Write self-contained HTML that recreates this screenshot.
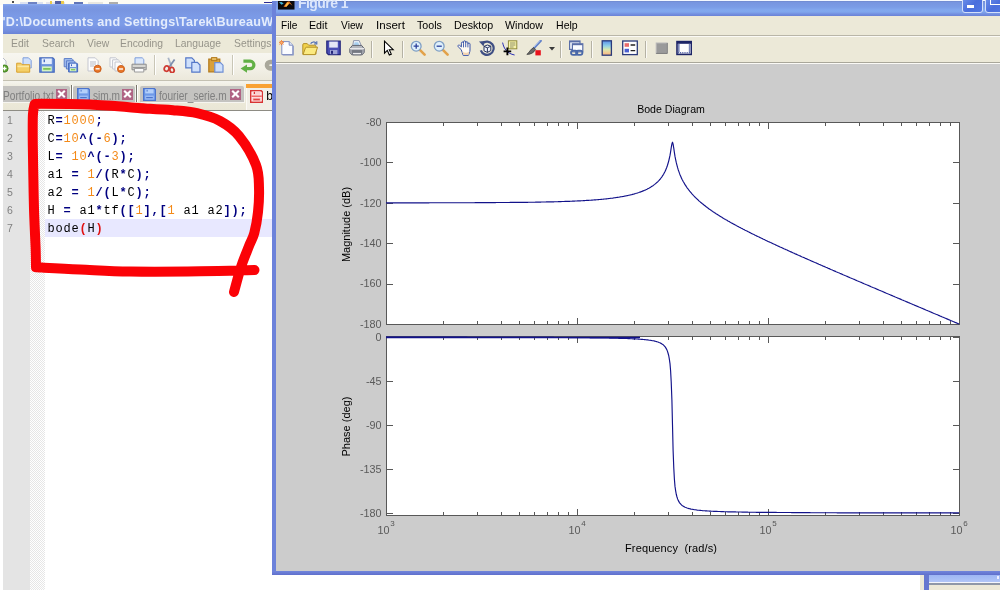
<!DOCTYPE html>
<html>
<head>
<meta charset="utf-8">
<title>screenshot</title>
<style>
html,body{margin:0;padding:0;background:#fff;}
body{width:1000px;height:600px;position:relative;overflow:hidden;font-family:"Liberation Sans",sans-serif;}
.abs{position:absolute;}
#stage{position:absolute;left:0;top:0;width:1000px;height:600px;overflow:hidden;will-change:transform;}
/* ---------- Notepad++ window ---------- */
#npp{position:absolute;left:3px;top:4px;width:270px;height:586px;background:#fff;overflow:hidden;}
#npp-title{position:absolute;left:0;top:0;width:270px;height:30px;
  background:linear-gradient(to bottom,#8dacf0 0px,#7c9ae4 2px,#7895e0 6px,#7b9ae6 12px,#7d9ce8 20px,#7590e0 26px,#6a83d6 30px);}
#npp-title span{position:absolute;left:-0.500px;top:10.500px;font-weight:bold;font-size:12.600px;color:#e4ecfc;white-space:nowrap;letter-spacing:0.210px;}
#npp-menu{position:absolute;left:0;top:30px;width:270px;height:19px;background:#ece9d8;}
#npp-menu span{position:absolute;top:3px;font-size:11px;color:#96948a;white-space:nowrap;transform:scaleX(.94);transform-origin:0 0;}
#npp-tool{position:absolute;left:0;top:49px;width:270px;height:29px;background:linear-gradient(to bottom,#f7f6f0 0,#f3f1e8 14px,#ece9dc 26px,#ece9dc 27px,#c2bfb0 27px,#c8c5b6 28.500px,#f4f3ec 28.500px,#f4f3ec 29px);box-sizing:border-box;}
#npp-tabs{position:absolute;left:0;top:78px;width:270px;height:29px;background:linear-gradient(to bottom,#f4f3ec 0,#efede2 4px,#ece9d8 20px,#e9e6d6 28px);border-bottom:1px solid #8e8c84;box-sizing:border-box;}
.tab{position:absolute;top:4px;height:16px;background:#c4c3c0;border-radius:2px 2px 0 0;box-shadow:1px 1px 0 #f6f5f0;}
.tab span{position:absolute;top:3.300px;font-size:12px;color:#7f7f7f;white-space:nowrap;transform:scaleX(.845);transform-origin:0 0;}
.tabx{position:absolute;top:3px;width:11px;height:10.500px;background:#b06484;}
.tabx svg{position:absolute;left:0;top:0;}
#gutter1{position:absolute;left:0;top:107px;width:27px;height:479px;background:#e4e4e4;}
#gutter2{position:absolute;left:27px;top:107px;width:15px;height:479px;background:repeating-conic-gradient(#e6e6e6 0 25%,#ffffff 0 50%) 0 0/2px 2px;}
.ln{position:absolute;left:4px;font-family:"Liberation Sans",sans-serif;font-size:10.500px;color:#808080;line-height:18px;height:18px;margin-top:0px;}
.code{position:absolute;left:44.400px;font-family:"Liberation Mono",monospace;font-size:12px;letter-spacing:0.800px;color:#000;line-height:18px;height:18px;white-space:pre;margin-top:0.600px;}
.code b{color:#000080;font-weight:bold;}
.code i{color:#f48a18;font-style:normal;}
.code u{color:#e01010;text-decoration:none;font-weight:bold;}
#curline{position:absolute;left:42px;top:215px;width:228px;height:18px;background:#e8e8ff;}
/* ---------- Figure window ---------- */
#fig{position:absolute;left:272px;top:0px;width:728px;height:575px;background:#cccccc;overflow:hidden;}
#fig-title{position:absolute;left:0;top:0;width:728px;height:16px;
  background:linear-gradient(to bottom,#f2f8ff 0px,#f2f8ff 1px,#6f88cc 1px,#7796e0 2.500px,#7a9ce6 7px,#82a8ee 10px,#80a6ec 12px,#7490e0 14px,#6a82d6 16px);}
#fig-title span{position:absolute;left:26px;top:-5px;font-weight:bold;font-size:14px;color:#dbe6fb;white-space:nowrap;letter-spacing:-0.550px;}
#fig-lb{position:absolute;left:0;top:1px;width:4px;height:574px;background:#6c82da;}
#fig-bb{position:absolute;left:0;top:571px;width:728px;height:4px;background:linear-gradient(to bottom,#7186dc,#5f70cc);}
#fig-menu{position:absolute;left:4px;top:16px;width:724px;height:19px;background:#ece9d8;}
#fig-menu span{position:absolute;top:3px;font-size:11px;color:#000;white-space:nowrap;transform-origin:0 0;}
#fig-tool{position:absolute;left:4px;top:35px;width:724px;height:29px;background:#ece9d8;border-top:1px solid #b9b6a8;border-bottom:1px solid #fbfaf6;box-sizing:border-box;}
#fig-tool:after{content:"";position:absolute;left:0;bottom:0;width:100%;height:1px;background:#a9a79a;}
#fig-tool:before{content:"";position:absolute;left:0;top:0;width:100%;height:1px;background:#fbfaf5;}
.sep{position:absolute;top:5px;width:1px;height:17px;background:#b5b2a4;border-right:1px solid #fbfaf6;}
.ico{position:absolute;}
svg text.tl{font-family:"Liberation Sans",sans-serif;font-size:10.800px;fill:#5a5a5a;}
svg text.ts{font-family:"Liberation Sans",sans-serif;font-size:8px;fill:#555;}
svg text.tt{font-family:"Liberation Sans",sans-serif;font-size:11px;fill:#000;}
svg text.t2{font-family:"Liberation Sans",sans-serif;font-size:10.600px;fill:#000;}
</style>
</head>
<body>
<div id="stage">

<!-- top sliver of whatever is behind -->
<div class="abs" style="left:0;top:0;width:272px;height:5px;background:#fdfcf4;"></div>
<div class="abs" style="left:0;top:0;width:272px;height:4px;opacity:.8;filter:blur(.4px)">
<div class="abs" style="left:12px;top:1px;width:1.500px;height:1.500px;background:#222;"></div>
<div class="abs" style="left:20px;top:1.500px;width:23px;height:2.500px;background:#d4dcf0;"></div>
<div class="abs" style="left:28px;top:1.500px;width:9px;height:2.500px;background:#4a64b8;"></div>
<div class="abs" style="left:46px;top:1.500px;width:19px;height:2.500px;background:#e0e0ea;"></div>
<div class="abs" style="left:49.500px;top:1px;width:2.500px;height:3px;background:#e8c020;"></div>
<div class="abs" style="left:55px;top:1px;width:6px;height:3px;background:#2a3a90;"></div>
<div class="abs" style="left:61px;top:1px;width:2.500px;height:3px;background:#e8c020;"></div>
<div class="abs" style="left:74px;top:1.500px;width:9px;height:2.500px;background:#3a54a8;"></div>
<div class="abs" style="left:88px;top:1.500px;width:15px;height:2.500px;background:#e4e2dc;"></div>
<div class="abs" style="left:109px;top:1.500px;width:9px;height:2px;background:#9a9a9a;"></div>
</div>
<div class="abs" style="left:264px;top:2px;width:8px;height:1px;background:#2a2a90;"></div>

<!-- =================== Notepad++ =================== -->
<div id="npp">
  <div id="npp-title"><span>'D:\Documents and Settings\Tarek\BureauW</span></div>
  <div id="npp-menu">
    <span style="left:8px">Edit</span>
    <span style="left:39px">Search</span>
    <span style="left:84px">View</span>
    <span style="left:117px">Encoding</span>
    <span style="left:172px">Language</span>
    <span style="left:231px">Settings</span>
  </div>
  <div id="npp-tool">
  <svg class="ico" style="left:-10px;top:4px" width="16" height="16" viewBox="0 0 16 16" ><path d="M3 1h7l3 3v11H3z" fill="#fdfdfd" stroke="#b9bcc8" stroke-width="1"/>
<circle cx="11.5" cy="11.5" r="3.6" fill="#5aa02c" stroke="#3f7f1c" stroke-width=".8"/><path d="M9.5 11.5h4M11.5 9.5v4" stroke="#fff" stroke-width="1.3"/></svg>
<svg class="ico" style="left:13px;top:4px" width="16" height="16" viewBox="0 0 16 16" ><path d="M7 .8h5.5l2.7 2.7V11H7z" fill="#cfe0fb" stroke="#7f9fdc" stroke-width="1"/>
<path d="M.7 6.2h4.2l1.2 1.5h7.6v7.5H.7z" fill="#f4cf68" stroke="#d9a12e" stroke-width="1"/>
<path d="M1.4 9.4h11.6" stroke="#fbe7a4" stroke-width="1.6"/></svg>
<svg class="ico" style="left:36px;top:4px" width="16" height="16" viewBox="0 0 16 16" ><path d="M.8 .8h13l1.4 1.4v13H.8z" fill="#6f93dc" stroke="#4468bc" stroke-width="1.200"/>
<rect x="2.800" y="1.500" width="10" height="5.600" fill="#e6eefc"/><rect x="4.600" y="2.400" width="1.300" height="2.800" fill="#3a5fb8"/>
<rect x="3" y="9.400" width="9.800" height="5" fill="#d4f2c0"/><rect x="4.200" y="11" width="7.400" height="1.800" fill="#7cc456"/></svg>
<svg class="ico" style="left:59.5px;top:4px" width="16" height="16" viewBox="0 0 16 16" ><path d="M1.200 1.600h7.600l1 1v7.200H1.200z" fill="#a4bff0" stroke="#5a7cc8" stroke-width="1"/>
<path d="M3.400 3.800h7.600l1 1V12H3.400z" fill="#a4bff0" stroke="#5a7cc8" stroke-width="1"/>
<path d="M5.600 6h8l1 1v8H5.600z" fill="#6f93dc" stroke="#4468bc" stroke-width="1"/>
<rect x="7" y="6.800" width="6" height="3.200" fill="#e6eefc"/><rect x="8" y="7.300" width="1" height="1.800" fill="#3a5fb8"/><rect x="7" y="11.200" width="6.200" height="3" fill="#d4f2c0"/><rect x="8" y="12.100" width="4.200" height="1.200" fill="#7cc456"/></svg>
<svg class="ico" style="left:83px;top:4px" width="16" height="16" viewBox="0 0 16 16" ><path d="M2 .8h7.2l3 3V14H2z" fill="#fcfcfc" stroke="#c4c6cf" stroke-width="1"/>
<path d="M4 5h6M4 7h6M4 9h4" stroke="#b9bbc6" stroke-width="1"/>
<circle cx="11.6" cy="11.8" r="3.6" fill="#e8772a" stroke="#c4540f" stroke-width=".8"/><path d="M9.6 11.8h4" stroke="#fff" stroke-width="1.4"/></svg>
<svg class="ico" style="left:105.5px;top:4px" width="16" height="16" viewBox="0 0 16 16" ><path d="M1 .8h5.6l2.4 2.4V10H1z" fill="#fcfcfc" stroke="#c4c6cf" stroke-width="1"/>
<path d="M3.6 2.8h5.6l2.4 2.4V12H3.6z" fill="#fcfcfc" stroke="#c4c6cf" stroke-width="1"/>
<path d="M6 5h5l2.4 2.4V14H6z" fill="#fcfcfc" stroke="#c4c6cf" stroke-width="1"/>
<circle cx="12" cy="12" r="3.6" fill="#e8772a" stroke="#c4540f" stroke-width=".8"/><path d="M10 12h4" stroke="#fff" stroke-width="1.4"/></svg>
<svg class="ico" style="left:128px;top:4px" width="16" height="16" viewBox="0 0 16 16" ><path d="M4 .8h7.2l1.6 1.6V8H4z" fill="#dbe8fc" stroke="#7f9fdc" stroke-width="1"/>
<path d="M1 7.2h14.2v5.6H1z" fill="#d6d6d2" stroke="#8c8c8c" stroke-width="1"/>
<path d="M1.6 10.6h13" stroke="#9a9a9a" stroke-width="1.2"/>
<path d="M3.4 11.4h9.4V15H3.4z" fill="#fbfbfb" stroke="#9a9a9a" stroke-width="1"/></svg>
<svg class="ico" style="left:160px;top:4px" width="16" height="16" viewBox="0 0 16 16" ><path d="M5.2 .8L8.6 9.6" stroke="#a9b4c6" stroke-width="1.8"/><path d="M11.6 2.4L6.4 9.8" stroke="#7f8fae" stroke-width="1.8"/>
<ellipse cx="3.6" cy="11.6" rx="2.3" ry="2.7" transform="rotate(25 3.6 11.6)" fill="none" stroke="#cf3a32" stroke-width="1.8"/>
<ellipse cx="9" cy="13" rx="2.1" ry="2.6" transform="rotate(-15 9 13)" fill="none" stroke="#cf3a32" stroke-width="1.8"/></svg>
<svg class="ico" style="left:182px;top:4px" width="16" height="16" viewBox="0 0 16 16" ><path d="M.8 .8h6l2.6 2.6v7.4H.8z" fill="#cfe0fb" stroke="#5578c8" stroke-width="1.2"/>
<path d="M6.8 5.4h5.6L15 8v7.2H6.8z" fill="#cfe0fb" stroke="#5578c8" stroke-width="1.2"/></svg>
<svg class="ico" style="left:205px;top:4px" width="16" height="16" viewBox="0 0 16 16" ><path d="M.8 2.2h11v12.6H.8z" fill="#d9a03a" stroke="#b37a1c" stroke-width="1.2"/>
<rect x="3.6" y=".6" width="5.2" height="3" fill="#e8bd62" stroke="#b37a1c" stroke-width="1"/>
<path d="M6.8 5.6h5.6L15 8.2v7H6.8z" fill="#cfe0fb" stroke="#6f8fd4" stroke-width="1.2"/></svg>
<svg class="ico" style="left:237px;top:4px" width="16" height="16" viewBox="0 0 16 16" ><path d="M3.4 4.2h6.8a3.7 3.7 0 0 1 0 7.4H7" fill="none" stroke="#62b046" stroke-width="3.2"/>
<path d="M.6 11.6L7 7.4v8.4z" fill="#62b046"/></svg>
<svg class="ico" style="left:260px;top:4px" width="16" height="16" viewBox="0 0 16 16" ><path d="M12 5H7.2a3.2 3.2 0 0 0 0 6.4H12" fill="none" stroke="#a9a79b" stroke-width="4.6"/></svg>
<div class="abs" style="left:151px;top:2px;width:1px;height:20px;background:#c9c6b6;border-right:1px solid #fff"></div>
<div class="abs" style="left:228.5px;top:2px;width:1px;height:20px;background:#c9c6b6;border-right:1px solid #fff"></div>
  </div>
  <div id="npp-tabs">
  <div class="tab" style="left:-4px;width:71px"><span style="left:4px">Portfolio.txt</span><div class="tabx" style="left:57px"><svg width="11" height="10" viewBox="0 0 11 10"><path d="M2.2 1.7L8.8 8.3M8.8 1.7L2.2 8.3" stroke="#fff" stroke-width="2.1"/></svg></div></div>
<div class="abs" style="left:67.700px;top:3px;width:1px;height:17px;background:#77756c;border-right:1px solid #fff"></div>
<div class="tab" style="left:70.400px;width:61.600px"><svg class="ico" style="left:3.8px;top:2px" width="13" height="13" viewBox="0 0 13 13" ><path d="M.6 .6h10.800l1.200 1.200v10.600H.6z" fill="#6f9ae8" stroke="#4c74cc" stroke-width="1.200"/>
<rect x="2.200" y="1.200" width="8.400" height="4.200" fill="#b4d0fa"/><rect x="3.600" y="1.800" width="1" height="1.800" fill="#4c74cc"/><rect x="2.200" y="7.600" width="8.600" height="4" fill="#9cbcf4"/><rect x="3.200" y="9" width="6.600" height="1.200" fill="#4c74cc"/></svg><span style="left:19.600px">sim.m</span><div class="tabx" style="left:48.900px"><svg width="11" height="10" viewBox="0 0 11 10"><path d="M2.2 1.7L8.8 8.3M8.8 1.7L2.2 8.3" stroke="#fff" stroke-width="2.1"/></svg></div></div>
<div class="abs" style="left:133.300px;top:3px;width:1px;height:17px;background:#77756c;border-right:1px solid #fff"></div>
<div class="tab" style="left:136.500px;width:104.500px"><svg class="ico" style="left:3.2px;top:2px" width="13" height="13" viewBox="0 0 13 13" ><path d="M.6 .6h10.800l1.200 1.200v10.600H.6z" fill="#6f9ae8" stroke="#4c74cc" stroke-width="1.200"/>
<rect x="2.200" y="1.200" width="8.400" height="4.200" fill="#b4d0fa"/><rect x="3.600" y="1.800" width="1" height="1.800" fill="#4c74cc"/><rect x="2.200" y="7.600" width="8.600" height="4" fill="#9cbcf4"/><rect x="3.200" y="9" width="6.600" height="1.200" fill="#4c74cc"/></svg><span style="left:19.500px">fourier_serie.m</span><div class="tabx" style="left:90.500px"><svg width="11" height="10" viewBox="0 0 11 10"><path d="M2.2 1.7L8.8 8.3M8.8 1.7L2.2 8.3" stroke="#fff" stroke-width="2.1"/></svg></div></div>
<div class="abs" style="left:243px;top:2px;width:30px;height:26px;background:#f1efe6;border-left:1px solid #fbfaf6"></div>
<div class="abs" style="left:243px;top:2px;width:30px;height:3.500px;background:#f9a233"></div>
<svg class="ico" style="left:247px;top:7.5px" width="13" height="13" viewBox="0 0 13 13" ><path d="M.7 .7h10.600l1.200 1.200v10.400H.7z" fill="#fff4f4" stroke="#d83434" stroke-width="1.400"/>
<rect x="2.600" y="1.400" width="7.800" height="3.400" fill="#fbd0d0"/><rect x="3.800" y="1.800" width="1.200" height="2.200" fill="#d83434"/><rect x="1.400" y="5.400" width="10.400" height="1.600" fill="#ee6a6a"/><rect x="2.600" y="7.600" width="8" height="3.800" fill="#f8b4b4"/><rect x="3.400" y="8.800" width="6.400" height="1.400" fill="#e04444"/></svg>
<span class="abs" style="left:263.300px;top:6.800px;font-size:12px;color:#000">b</span>
  </div>
  <div id="gutter1"></div>
  <div id="gutter2"></div>
  <div id="curline"></div>
  <div class="ln" style="top:107px">1</div>
  <div class="ln" style="top:125px">2</div>
  <div class="ln" style="top:143px">3</div>
  <div class="ln" style="top:161px">4</div>
  <div class="ln" style="top:179px">5</div>
  <div class="ln" style="top:197px">6</div>
  <div class="ln" style="top:215px">7</div>
  <div class="code" style="top:107px">R<b>=</b><i>1000</i><b>;</b></div>
  <div class="code" style="top:125px">C<b>=</b><i>10</i><b>^(-</b><i>6</i><b>);</b></div>
  <div class="code" style="top:143px">L<b>=</b> <i>10</i><b>^(-</b><i>3</i><b>);</b></div>
  <div class="code" style="top:161px">a1 <b>=</b> <i>1</i><b>/(</b>R<b>*</b>C<b>);</b></div>
  <div class="code" style="top:179px">a2 <b>=</b> <i>1</i><b>/(</b>L<b>*</b>C<b>);</b></div>
  <div class="code" style="top:197px">H <b>=</b> a1<b>*</b>tf<b>([</b><i>1</i><b>],[</b><i>1</i> a1 a2<b>]);</b></div>
  <div class="code" style="top:215px">bode<u>(</u>H<u>)</u></div>
</div>

<!-- red hand-drawn loop -->
<svg class="abs" style="left:0;top:0" width="280" height="310" viewBox="0 0 280 310">
  <path d="M254.5 270.0 C245.4 270.2 220.8 271.1 200.0 271.3 C179.2 271.6 150.0 271.8 130.0 271.5 C110.0 271.2 94.7 270.1 80.0 269.5 C65.3 268.9 49.3 268.0 42.0 267.6 C34.7 267.2 37.0 267.4 36.0 267.3 C35.9 264.1 35.9 256.7 35.6 248.0 C35.3 239.3 34.6 226.3 34.2 215.0 C33.8 203.7 33.6 191.7 33.4 180.0 C33.2 168.3 32.9 155.8 32.8 145.0 C32.7 134.2 32.6 121.8 32.9 115.0 C33.2 108.2 34.3 106.2 34.6 104.4 C35.7 104.3 31.8 103.8 41.0 103.8 C50.2 103.8 71.8 103.8 90.0 104.6 C108.2 105.4 136.2 107.9 150.0 108.8 C163.8 109.7 165.2 109.5 173.0 110.2 C180.8 110.9 189.2 111.4 197.0 113.2 C204.8 115.0 213.0 117.2 220.0 121.0 C227.0 124.8 233.0 128.7 239.0 136.0 C245.0 143.3 252.7 156.3 256.0 165.0 C259.3 173.7 258.7 180.2 259.0 188.0 C259.3 195.8 258.8 204.5 258.0 212.0 C257.2 219.5 255.8 227.3 254.3 233.0 C252.8 238.7 251.2 240.3 249.0 246.0 C246.8 251.7 243.5 259.3 241.0 267.0 C238.5 274.7 235.2 287.8 234.0 292.0" fill="none" stroke="#fb0207" stroke-width="10" stroke-linecap="round" stroke-linejoin="round"/>
</svg>

<!-- stuff peeking out under the figure window (bottom-right) -->
<div class="abs" style="left:920px;top:574px;width:80px;height:16px;background:#ece9d8;"></div>
<div class="abs" style="left:929px;top:575px;width:71px;height:8px;background:linear-gradient(to bottom,#9db6f4,#b4c8f8);"></div>
<div class="abs" style="left:929px;top:582px;width:71px;height:1px;background:#f4f6fc;"></div>
<div class="abs" style="left:929px;top:583px;width:71px;height:2px;background:#8f98a8;"></div>
<div class="abs" style="left:924px;top:574px;width:5px;height:16px;background:#6678d0;"></div>
<div class="abs" style="left:997px;top:576px;width:2px;height:3px;background:#eef;"></div>

<!-- =================== Figure window =================== -->
<div id="fig">
  <div id="fig-title"><span>Figure 1</span>
  <svg class="abs" style="left:6px;top:1px" width="17" height="9" viewBox="0 0 17 10" preserveAspectRatio="none"><rect x="0" y="0" width="16.5" height="9.5" fill="#0a0a0c"/><path d="M1 1.500l2.500 2.800 2.200-1.600L3.500 1z" fill="#3fb4d8"/><path d="M5.500 6.500L9 1.200l2.200-.8 3.300 4.800-2.800-2.400L8 6.800z" fill="#e8761c"/><path d="M7 5.500L9.500 1.500l1.500 1-2.500 4z" fill="#fbc04a"/></svg>
  <div class="abs" style="left:690px;top:-6px;width:19px;height:17px;border:1px solid #d4e0fa;border-radius:3px;background:linear-gradient(135deg,#7296ec,#4a6edc 55%,#5278e2)"></div>
<div class="abs" style="left:695px;top:5px;width:7px;height:3px;background:#fff"></div>
<div class="abs" style="left:713px;top:-6px;width:19px;height:17px;border:1px solid #d4e0fa;border-radius:3px;background:linear-gradient(135deg,#7296ec,#4a6edc 55%,#5278e2)"></div>
<div class="abs" style="left:718px;top:-4px;width:12px;height:9px;border:1.500px solid #fff;border-top-width:3px;box-sizing:border-box"></div>
  </div>
  <div id="fig-menu">
    <span style="left:5px;transform:scaleX(0.92)">File</span>
    <span style="left:33px;transform:scaleX(0.97)">Edit</span>
    <span style="left:65px;transform:scaleX(0.93)">View</span>
    <span style="left:100px;transform:scaleX(1.05)">Insert</span>
    <span style="left:141px;transform:scaleX(0.97)">Tools</span>
    <span style="left:178px;transform:scaleX(0.97)">Desktop</span>
    <span style="left:229px;transform:scaleX(0.97)">Window</span>
    <span style="left:280px;transform:scaleX(0.96)">Help</span>
  </div>
  <div id="fig-tool">
  <svg class="ico" style="left:3px;top:4px" width="16" height="16" viewBox="0 0 16 16" ><path d="M3.8 2.6h7.4l3.6 3.6v9.4H3.800z" fill="#8e9cc8"/><path d="M2.800 1.600h7.400l3.600 3.600v9.400H2.800z" fill="#fbfcff" stroke="#7f8ec0" stroke-width="1"/><path d="M10.200 1.600v3.600h3.600" fill="#dfe6f6" stroke="#7f8ec0" stroke-width="1"/>
<path d="M2.500 .2v5M0 2.700h5M.7 .9l3.600 3.600M4.300 .9L.7 4.500" stroke="#ee7a30" stroke-width="1"/><circle cx="2.500" cy="2.700" r="1.100" fill="#f8b070"/></svg>
<svg class="ico" style="left:26px;top:4px" width="16" height="16" viewBox="0 0 16 16" ><path d="M8.600 3.600c1.600-2.200 4.200-2.200 5.600-.2" fill="none" stroke="#4a6ab0" stroke-width="1.100"/><path d="M14.800 1.200v2.800h-2.800" fill="none" stroke="#4a6ab0" stroke-width="1.100"/>
<path d="M.8 4.800c0-.8.400-1.200 1.200-1.200h3.200l1.400 1.600h6.200c.8 0 1.200.4 1.200 1.200v7.800H.8z" fill="#f2d24a" stroke="#b4922a" stroke-width="1"/>
<path d="M1 14.600L3.400 8c.2-.6.600-.8 1.200-.8h11l-2.600 7.400z" fill="#fbea80" stroke="#b4922a" stroke-width="1"/></svg>
<svg class="ico" style="left:49.5px;top:4px" width="16" height="16" viewBox="0 0 16 16" ><path d="M.8 1h13.4v13.6H2.4L.8 13z" fill="#4a4eb4" stroke="#23267a" stroke-width="1.2"/>
<rect x="3.2" y="1.6" width="8.6" height="6" fill="#e4e6f6"/><rect x="4" y="10" width="7.4" height="4.2" fill="#9fa4d8"/><rect x="5" y="10.8" width="2" height="3" fill="#23267a"/></svg>
<svg class="ico" style="left:72.5px;top:4px" width="16" height="16" viewBox="0 0 16 16" ><path d="M4.600 .6h5.600l2.400 6H3.600z" fill="#eef3fb" stroke="#8f97ae" stroke-width="1"/><path d="M5.600 2.200h3.600l1 2.800H5z" fill="#a8d0f0"/>
<path d="M.8 8.600l2.600-3.200h9.200l2.600 3.200v3.800l-2 2.400H2.800l-2-2.400z" fill="#b4b7be" stroke="#5f636e" stroke-width="1"/>
<path d="M.8 8.600h14.400" stroke="#e8e8ea" stroke-width="1.200"/><path d="M2.600 11h10.800" stroke="#5f636e" stroke-width="1.400"/>
<path d="M3 12.400h10l-1 2.400H4z" fill="#ececee" stroke="#5f636e" stroke-width=".8"/></svg>
<svg class="ico" style="left:105px;top:4px" width="16" height="16" viewBox="0 0 16 16" ><path d="M3.5 1.2v12l2.8-2.8 2 4.6 2-.9-2-4.4h3.9z" fill="#fff" stroke="#000" stroke-width="1.1" stroke-linejoin="miter"/></svg>
<svg class="ico" style="left:134px;top:4px" width="16" height="16" viewBox="0 0 16 16" ><path d="M9.6 9.6l5 5" stroke="#e2a24a" stroke-width="2.6" stroke-linecap="round"/>
<circle cx="6.2" cy="6.2" r="4.9" fill="#dff0fb" stroke="#7f9fc4" stroke-width="1.3"/><path d="M3.6 6.2h5.2M6.2 3.6v5.2" stroke="#2a3f9a" stroke-width="1.3"/></svg>
<svg class="ico" style="left:157px;top:4px" width="16" height="16" viewBox="0 0 16 16" ><path d="M9.6 9.6l5 5" stroke="#e2a24a" stroke-width="2.6" stroke-linecap="round"/>
<circle cx="6.2" cy="6.2" r="4.9" fill="#dff0fb" stroke="#7f9fc4" stroke-width="1.3"/><path d="M3.6 6.2h5.2" stroke="#2a3f9a" stroke-width="1.3"/></svg>
<svg class="ico" style="left:180.5px;top:4px" width="16" height="16" viewBox="0 0 16 16" ><path d="M4.200 9.600L1.200 6.800c-1-1 .4-2.400 1.500-1.400l1.700 1.500V3.200c0-1.600 2.100-1.600 2.100 0V2c0-1.600 2.200-1.600 2.200 0v.8c0-1.500 2.200-1.500 2.200 0v1.300c0-1.400 2.100-1.400 2.100 0V10c0 2-1 3.800-1.600 5.400H6.200C5.600 13.600 4.800 11.200 4.200 9.600z" fill="#fffaf2" stroke="#3a55a8" stroke-width="1" stroke-linejoin="round"/>
<path d="M6.500 3.200v4.200M8.700 2.800v4.400M10.900 4v3.400" stroke="#3a55a8" stroke-width=".9"/><path d="M5.400 11.600c1.800 1.600 5 1.600 6.800-.2l-.8 3.600H6.600z" fill="#f4d2ae"/></svg>
<svg class="ico" style="left:203px;top:4px" width="16" height="16" viewBox="0 0 16 16" ><path d="M3.300 3.600A6.600 6.600 0 1 1 1.800 10.400" fill="none" stroke="#3f4f84" stroke-width="2.200"/><path d="M0 1.400l5.600-.4-1 5.400z" fill="#3f4f84"/>
<path d="M5 6.400l3.400-1.400 3.400 1.200v4.400l-3.400 1.800L5 10.800z" fill="#f0f4fb" stroke="#26335e" stroke-width="1"/><path d="M5 6.400l3.400 1.400 3.400-1.600M8.400 7.800v4.600" fill="none" stroke="#26335e" stroke-width="1"/></svg>
<svg class="ico" style="left:226px;top:4px" width="16" height="16" viewBox="0 0 16 16" ><rect x="6.400" y=".8" width="8.400" height="8" fill="#f7f3a8" stroke="#8f8a3a" stroke-width="1"/><path d="M8 3h5.400M8 5h5.400M8 7h3.600" stroke="#7a7a5a" stroke-width=".8"/>
<path d="M.6 2.600C2 9 5 13.400 12.600 15" fill="none" stroke="#2a2fb4" stroke-width="1"/>
<path d="M1.600 11.400h7.600M5.400 7.600v7.600" stroke="#000" stroke-width="1.900"/></svg>
<svg class="ico" style="left:250px;top:4px" width="16" height="16" viewBox="0 0 16 16" ><path d="M14.800 .8L7.600 8.600" stroke="#5f7fc8" stroke-width="2.200" stroke-linecap="round"/><path d="M14 .6L8 7" stroke="#bcd0f4" stroke-width=".8"/>
<path d="M7.800 7.600l1.800 1.800c-1.600 3.400-5.400 5.200-8.800 5C3.400 12.800 4 9.200 7.800 7.600z" fill="#6a6a6a" stroke="#3a3a3a" stroke-width=".7"/>
<rect x="9.400" y="10.200" width="5.400" height="5.200" fill="#e8121c"/></svg>
<svg class="ico" style="left:292px;top:4px" width="16" height="16" viewBox="0 0 16 16" ><rect x="1.600" y="1" width="10.400" height="8.400" fill="#f4f7fd" stroke="#5a6ea8" stroke-width="1.200"/><rect x="1.600" y="1" width="10.400" height="1.400" fill="#5a6ea8"/>
<rect x="4.400" y="3.800" width="10.400" height="8" fill="#fbfcff" stroke="#5a6ea8" stroke-width="1.200"/><rect x="4.400" y="3.800" width="10.400" height="1.400" fill="#5a6ea8"/>
<rect x="3" y="10.600" width="6.400" height="4.200" rx="2.100" fill="none" stroke="#4a68a8" stroke-width="1.800"/><rect x="8" y="10.600" width="6.400" height="4.200" rx="2.100" fill="none" stroke="#4a68a8" stroke-width="1.800"/></svg>
<svg class="ico" style="left:323px;top:4px" width="16" height="16" viewBox="0 0 16 16" ><defs><linearGradient id="cbg" x1="0" y1="0" x2="0" y2="1"><stop offset="0" stop-color="#5b8fe8"/><stop offset=".35" stop-color="#8fd0e8"/><stop offset=".6" stop-color="#d8e8b0"/><stop offset=".85" stop-color="#f4c890"/><stop offset="1" stop-color="#f0a878"/></linearGradient></defs>
<rect x="3.200" y=".8" width="9.200" height="14.400" fill="url(#cbg)" stroke="#2a3a7a" stroke-width="1.300"/></svg>
<svg class="ico" style="left:346px;top:4px" width="16" height="16" viewBox="0 0 16 16" ><rect x=".7" y="1" width="14.600" height="13.600" fill="#fdfdfd" stroke="#2a3a7a" stroke-width="1.300"/>
<rect x="2.600" y="3.200" width="4.400" height="3.600" fill="#e86a6a"/><rect x="2.600" y="8.800" width="4.400" height="3.600" fill="#4a5fd0"/>
<path d="M8.600 5h4.600M8.600 10.600h4.600" stroke="#222" stroke-width="1.400"/></svg>
<svg class="ico" style="left:377.5px;top:4px" width="16" height="16" viewBox="0 0 16 16" ><rect x="2.200" y="3" width="11" height="10.400" fill="#9a9a9a" stroke="#b8b8b8" stroke-width="1"/><path d="M2.200 13.400h11V3" fill="none" stroke="#7a7a7a" stroke-width="1"/></svg>
<svg class="ico" style="left:400px;top:4px" width="16" height="16" viewBox="0 0 16 16" ><rect x="1" y="1.600" width="14.400" height="12.800" fill="#fdfdfd" stroke="#1c2466" stroke-width="1.600"/><rect x="1" y="1.600" width="14.400" height="2.200" fill="#1c2466"/>
<path d="M2.800 4v8.400M13.600 4v8.400" stroke="#7a86b8" stroke-width="1.600"/><path d="M1.800 12.800h12.800" stroke="#5a68a8" stroke-width="1.600" stroke-dasharray="1.200 1"/></svg>
<svg class="ico" style="left:273px;top:11px" width="6" height="4" viewBox="0 0 6 4" ><path d="M0 0h6L3 3.400z" fill="#3a3a3a"/></svg>
<div class="sep" style="left:95px"></div>
<div class="sep" style="left:126px"></div>
<div class="sep" style="left:284px"></div>
<div class="sep" style="left:315px"></div>
<div class="sep" style="left:369px"></div>
  </div>
  <div id="fig-lb"></div>
  <div id="fig-bb"></div>
</div>
<svg class="abs" style="left:0;top:0" width="1000" height="600" viewBox="0 0 1000 600">
<rect x="386.5" y="122.5" width="573" height="202" fill="#fff" stroke="#585858" stroke-width="1"/>
<rect x="386.5" y="336.5" width="573" height="179" fill="#fff" stroke="#585858" stroke-width="1"/>
<path d="M386.5 122 v7.0 M386.5 325 v-7.0 M386.5 336 v7.0 M386.5 516 v-7.0 M443.5 122 v4.0 M443.5 325 v-4.0 M443.5 336 v4.0 M443.5 516 v-4.0 M477.5 122 v4.0 M477.5 325 v-4.0 M477.5 336 v4.0 M477.5 516 v-4.0 M501.5 122 v4.0 M501.5 325 v-4.0 M501.5 336 v4.0 M501.5 516 v-4.0 M519.5 122 v4.0 M519.5 325 v-4.0 M519.5 336 v4.0 M519.5 516 v-4.0 M534.5 122 v4.0 M534.5 325 v-4.0 M534.5 336 v4.0 M534.5 516 v-4.0 M547.5 122 v4.0 M547.5 325 v-4.0 M547.5 336 v4.0 M547.5 516 v-4.0 M558.5 122 v4.0 M558.5 325 v-4.0 M558.5 336 v4.0 M558.5 516 v-4.0 M568.5 122 v4.0 M568.5 325 v-4.0 M568.5 336 v4.0 M568.5 516 v-4.0 M577.5 122 v7.0 M577.5 325 v-7.0 M577.5 336 v7.0 M577.5 516 v-7.0 M634.5 122 v4.0 M634.5 325 v-4.0 M634.5 336 v4.0 M634.5 516 v-4.0 M668.5 122 v4.0 M668.5 325 v-4.0 M668.5 336 v4.0 M668.5 516 v-4.0 M692.5 122 v4.0 M692.5 325 v-4.0 M692.5 336 v4.0 M692.5 516 v-4.0 M710.5 122 v4.0 M710.5 325 v-4.0 M710.5 336 v4.0 M710.5 516 v-4.0 M725.5 122 v4.0 M725.5 325 v-4.0 M725.5 336 v4.0 M725.5 516 v-4.0 M738.5 122 v4.0 M738.5 325 v-4.0 M738.5 336 v4.0 M738.5 516 v-4.0 M749.5 122 v4.0 M749.5 325 v-4.0 M749.5 336 v4.0 M749.5 516 v-4.0 M759.5 122 v4.0 M759.5 325 v-4.0 M759.5 336 v4.0 M759.5 516 v-4.0 M768.5 122 v7.0 M768.5 325 v-7.0 M768.5 336 v7.0 M768.5 516 v-7.0 M825.5 122 v4.0 M825.5 325 v-4.0 M825.5 336 v4.0 M825.5 516 v-4.0 M859.5 122 v4.0 M859.5 325 v-4.0 M859.5 336 v4.0 M859.5 516 v-4.0 M883.5 122 v4.0 M883.5 325 v-4.0 M883.5 336 v4.0 M883.5 516 v-4.0 M901.5 122 v4.0 M901.5 325 v-4.0 M901.5 336 v4.0 M901.5 516 v-4.0 M916.5 122 v4.0 M916.5 325 v-4.0 M916.5 336 v4.0 M916.5 516 v-4.0 M929.5 122 v4.0 M929.5 325 v-4.0 M929.5 336 v4.0 M929.5 516 v-4.0 M940.5 122 v4.0 M940.5 325 v-4.0 M940.5 336 v4.0 M940.5 516 v-4.0 M950.5 122 v4.0 M950.5 325 v-4.0 M950.5 336 v4.0 M950.5 516 v-4.0 M959.5 122 v7.0 M959.5 325 v-7.0 M959.5 336 v7.0 M959.5 516 v-7.0 M386 122.5 h7 M960 122.5 h-7 M386 162.5 h7 M960 162.5 h-7 M386 203.5 h7 M960 203.5 h-7 M386 243.5 h7 M960 243.5 h-7 M386 284.5 h7 M960 284.5 h-7 M386 324.5 h7 M960 324.5 h-7 M386 337.5 h7 M960 337.5 h-7 M386 381.5 h7 M960 381.5 h-7 M386 425.5 h7 M960 425.5 h-7 M386 469.5 h7 M960 469.5 h-7 M386 513.5 h7 M960 513.5 h-7" stroke="#585858" stroke-width="1" fill="none"/>
<path d="M386.0 202.8 L386.6 202.8 L387.3 202.8 L387.9 202.8 L388.5 202.8 L389.2 202.8 L389.8 202.8 L390.5 202.8 L391.1 202.8 L391.7 202.8 L392.4 202.8 L393.0 202.8 L393.6 202.8 L394.3 202.8 L394.9 202.8 L395.5 202.8 L396.2 202.8 L396.8 202.8 L397.5 202.8 L398.1 202.8 L398.7 202.8 L399.4 202.8 L400.0 202.8 L400.6 202.8 L401.3 202.8 L401.9 202.8 L402.6 202.8 L403.2 202.8 L403.8 202.8 L404.5 202.8 L405.1 202.8 L405.7 202.8 L406.4 202.8 L407.0 202.8 L407.6 202.8 L408.3 202.8 L408.9 202.8 L409.6 202.8 L410.2 202.8 L410.8 202.8 L411.5 202.8 L412.1 202.8 L412.7 202.8 L413.4 202.8 L414.0 202.8 L414.6 202.8 L415.3 202.8 L415.9 202.8 L416.6 202.8 L417.2 202.8 L417.8 202.8 L418.5 202.8 L419.1 202.8 L419.7 202.8 L420.4 202.8 L421.0 202.8 L421.7 202.8 L422.3 202.8 L422.9 202.8 L423.6 202.8 L424.2 202.8 L424.8 202.8 L425.5 202.8 L426.1 202.8 L426.7 202.8 L427.4 202.8 L428.0 202.8 L428.7 202.8 L429.3 202.8 L429.9 202.7 L430.6 202.7 L431.2 202.7 L431.8 202.7 L432.5 202.7 L433.1 202.7 L433.8 202.7 L434.4 202.7 L435.0 202.7 L435.7 202.7 L436.3 202.7 L436.9 202.7 L437.6 202.7 L438.2 202.7 L438.8 202.7 L439.5 202.7 L440.1 202.7 L440.8 202.7 L441.4 202.7 L442.0 202.7 L442.7 202.7 L443.3 202.7 L443.9 202.7 L444.6 202.7 L445.2 202.7 L445.8 202.7 L446.5 202.7 L447.1 202.7 L447.8 202.7 L448.4 202.7 L449.0 202.7 L449.7 202.7 L450.3 202.7 L450.9 202.7 L451.6 202.7 L452.2 202.7 L452.9 202.7 L453.5 202.7 L454.1 202.7 L454.8 202.7 L455.4 202.7 L456.0 202.7 L456.7 202.7 L457.3 202.7 L457.9 202.7 L458.6 202.7 L459.2 202.7 L459.9 202.7 L460.5 202.7 L461.1 202.7 L461.8 202.7 L462.4 202.7 L463.0 202.7 L463.7 202.7 L464.3 202.7 L464.9 202.7 L465.6 202.7 L466.2 202.7 L466.9 202.7 L467.5 202.7 L468.1 202.7 L468.8 202.7 L469.4 202.7 L470.0 202.7 L470.7 202.7 L471.3 202.7 L472.0 202.7 L472.6 202.7 L473.2 202.7 L473.9 202.7 L474.5 202.7 L475.1 202.6 L475.8 202.6 L476.4 202.6 L477.0 202.6 L477.7 202.6 L478.3 202.6 L479.0 202.6 L479.6 202.6 L480.2 202.6 L480.9 202.6 L481.5 202.6 L482.1 202.6 L482.8 202.6 L483.4 202.6 L484.0 202.6 L484.7 202.6 L485.3 202.6 L486.0 202.6 L486.6 202.6 L487.2 202.6 L487.9 202.6 L488.5 202.6 L489.1 202.6 L489.8 202.6 L490.4 202.6 L491.0 202.6 L491.7 202.6 L492.3 202.6 L493.0 202.6 L493.6 202.6 L494.2 202.6 L494.9 202.6 L495.5 202.6 L496.1 202.5 L496.8 202.5 L497.4 202.5 L498.1 202.5 L498.7 202.5 L499.3 202.5 L500.0 202.5 L500.6 202.5 L501.2 202.5 L501.9 202.5 L502.5 202.5 L503.1 202.5 L503.8 202.5 L504.4 202.5 L505.1 202.5 L505.7 202.5 L506.3 202.5 L507.0 202.5 L507.6 202.5 L508.2 202.5 L508.9 202.5 L509.5 202.5 L510.1 202.4 L510.8 202.4 L511.4 202.4 L512.1 202.4 L512.7 202.4 L513.3 202.4 L514.0 202.4 L514.6 202.4 L515.2 202.4 L515.9 202.4 L516.5 202.4 L517.2 202.4 L517.8 202.4 L518.4 202.4 L519.1 202.4 L519.7 202.4 L520.3 202.3 L521.0 202.3 L521.6 202.3 L522.2 202.3 L522.9 202.3 L523.5 202.3 L524.2 202.3 L524.8 202.3 L525.4 202.3 L526.1 202.3 L526.7 202.3 L527.3 202.3 L528.0 202.3 L528.6 202.2 L529.2 202.2 L529.9 202.2 L530.5 202.2 L531.2 202.2 L531.8 202.2 L532.4 202.2 L533.1 202.2 L533.7 202.2 L534.3 202.2 L535.0 202.2 L535.6 202.1 L536.3 202.1 L536.9 202.1 L537.5 202.1 L538.2 202.1 L538.8 202.1 L539.4 202.1 L540.1 202.1 L540.7 202.1 L541.3 202.0 L542.0 202.0 L542.6 202.0 L543.3 202.0 L543.9 202.0 L544.5 202.0 L545.2 202.0 L545.8 202.0 L546.4 201.9 L547.1 201.9 L547.7 201.9 L548.4 201.9 L549.0 201.9 L549.6 201.9 L550.3 201.9 L550.9 201.8 L551.5 201.8 L552.2 201.8 L552.8 201.8 L553.4 201.8 L554.1 201.8 L554.7 201.7 L555.4 201.7 L556.0 201.7 L556.6 201.7 L557.3 201.7 L557.9 201.7 L558.5 201.6 L559.2 201.6 L559.8 201.6 L560.4 201.6 L561.1 201.6 L561.7 201.5 L562.4 201.5 L563.0 201.5 L563.6 201.5 L564.3 201.5 L564.9 201.4 L565.5 201.4 L566.2 201.4 L566.8 201.4 L567.5 201.3 L568.1 201.3 L568.7 201.3 L569.4 201.3 L570.0 201.3 L570.6 201.2 L571.3 201.2 L571.9 201.2 L572.5 201.1 L573.2 201.1 L573.8 201.1 L574.5 201.1 L575.1 201.0 L575.7 201.0 L576.4 201.0 L577.0 201.0 L577.6 200.9 L578.3 200.9 L578.9 200.9 L579.5 200.8 L580.2 200.8 L580.8 200.8 L581.5 200.7 L582.1 200.7 L582.7 200.7 L583.4 200.6 L584.0 200.6 L584.6 200.6 L585.3 200.5 L585.9 200.5 L586.5 200.4 L587.2 200.4 L587.8 200.4 L588.5 200.3 L589.1 200.3 L589.7 200.2 L590.4 200.2 L591.0 200.2 L591.6 200.1 L592.3 200.1 L592.9 200.0 L593.6 200.0 L594.2 199.9 L594.8 199.9 L595.5 199.8 L596.1 199.8 L596.7 199.7 L597.4 199.7 L598.0 199.6 L598.6 199.6 L599.3 199.5 L599.9 199.5 L600.6 199.4 L601.2 199.3 L601.8 199.3 L602.5 199.2 L603.1 199.2 L603.7 199.1 L604.4 199.0 L605.0 199.0 L605.7 198.9 L606.3 198.8 L606.9 198.8 L607.6 198.7 L608.2 198.6 L608.8 198.5 L609.5 198.5 L610.1 198.4 L610.7 198.3 L611.4 198.2 L612.0 198.2 L612.7 198.1 L613.3 198.0 L613.9 197.9 L614.6 197.8 L615.2 197.7 L615.8 197.6 L616.5 197.5 L617.1 197.4 L617.7 197.4 L618.4 197.3 L619.0 197.2 L619.7 197.0 L620.3 196.9 L620.9 196.8 L621.6 196.7 L622.2 196.6 L622.8 196.5 L623.5 196.4 L624.1 196.3 L624.8 196.1 L625.4 196.0 L626.0 195.9 L626.7 195.8 L627.3 195.6 L627.9 195.5 L628.6 195.3 L629.2 195.2 L629.8 195.0 L630.5 194.9 L631.1 194.7 L631.8 194.6 L632.4 194.4 L633.0 194.2 L633.7 194.1 L634.3 193.9 L634.9 193.7 L635.6 193.5 L636.2 193.3 L636.8 193.2 L637.5 193.0 L638.1 192.7 L638.8 192.5 L639.4 192.3 L640.0 192.1 L640.7 191.9 L641.3 191.6 L641.9 191.4 L642.6 191.1 L643.2 190.9 L643.8 190.6 L644.5 190.3 L645.1 190.1 L645.8 189.8 L646.4 189.5 L647.0 189.2 L647.7 188.8 L648.3 188.5 L648.9 188.2 L649.6 187.8 L650.2 187.4 L650.9 187.0 L651.5 186.6 L652.1 186.2 L652.8 185.8 L653.4 185.4 L654.0 184.9 L654.7 184.4 L655.3 183.9 L655.9 183.4 L656.6 182.8 L657.2 182.2 L657.9 181.6 L658.5 180.9 L659.1 180.3 L659.8 179.5 L660.4 178.8 L661.0 178.0 L661.7 177.1 L662.3 176.2 L663.0 175.2 L663.6 174.2 L664.2 173.0 L664.9 171.8 L665.5 170.4 L666.1 169.0 L666.8 167.3 L667.4 165.5 L668.0 163.5 L668.7 161.1 L669.3 158.5 L670.0 155.4 L670.6 151.8 L671.2 147.8 L671.9 143.9 L672.5 142.2 L673.1 144.2 L673.8 148.3 L674.4 152.6 L675.0 156.4 L675.7 159.8 L676.3 162.7 L677.0 165.3 L677.6 167.7 L678.2 169.7 L678.9 171.6 L679.5 173.4 L680.1 175.0 L680.8 176.5 L681.4 177.9 L682.0 179.3 L682.7 180.5 L683.3 181.7 L684.0 182.8 L684.6 183.9 L685.2 184.9 L685.9 185.9 L686.5 186.9 L687.1 187.8 L687.8 188.7 L688.4 189.5 L689.1 190.4 L689.7 191.2 L690.3 191.9 L691.0 192.7 L691.6 193.4 L692.2 194.1 L692.9 194.8 L693.5 195.5 L694.1 196.2 L694.8 196.9 L695.4 197.5 L696.1 198.1 L696.7 198.7 L697.3 199.3 L698.0 199.9 L698.6 200.5 L699.2 201.1 L699.9 201.6 L700.5 202.2 L701.2 202.7 L701.8 203.3 L702.4 203.8 L703.1 204.3 L703.7 204.8 L704.3 205.3 L705.0 205.8 L705.6 206.3 L706.2 206.8 L706.9 207.3 L707.5 207.8 L708.2 208.2 L708.8 208.7 L709.4 209.2 L710.1 209.6 L710.7 210.1 L711.3 210.5 L712.0 210.9 L712.6 211.4 L713.2 211.8 L713.9 212.2 L714.5 212.7 L715.2 213.1 L715.8 213.5 L716.4 213.9 L717.1 214.3 L717.7 214.7 L718.3 215.1 L719.0 215.5 L719.6 215.9 L720.2 216.3 L720.9 216.7 L721.5 217.1 L722.2 217.5 L722.8 217.9 L723.4 218.3 L724.1 218.7 L724.7 219.0 L725.3 219.4 L726.0 219.8 L726.6 220.1 L727.3 220.5 L727.9 220.9 L728.5 221.2 L729.2 221.6 L729.8 222.0 L730.4 222.3 L731.1 222.7 L731.7 223.0 L732.3 223.4 L733.0 223.7 L733.6 224.1 L734.3 224.4 L734.9 224.8 L735.5 225.1 L736.2 225.5 L736.8 225.8 L737.4 226.2 L738.1 226.5 L738.7 226.8 L739.3 227.2 L740.0 227.5 L740.6 227.8 L741.3 228.2 L741.9 228.5 L742.5 228.8 L743.2 229.2 L743.8 229.5 L744.4 229.8 L745.1 230.2 L745.7 230.5 L746.4 230.8 L747.0 231.1 L747.6 231.5 L748.3 231.8 L748.9 232.1 L749.5 232.4 L750.2 232.7 L750.8 233.1 L751.4 233.4 L752.1 233.7 L752.7 234.0 L753.4 234.3 L754.0 234.6 L754.6 234.9 L755.3 235.3 L755.9 235.6 L756.5 235.9 L757.2 236.2 L757.8 236.5 L758.5 236.8 L759.1 237.1 L759.7 237.4 L760.4 237.7 L761.0 238.0 L761.6 238.3 L762.3 238.6 L762.9 238.9 L763.5 239.2 L764.2 239.5 L764.8 239.8 L765.5 240.2 L766.1 240.5 L766.7 240.8 L767.4 241.1 L768.0 241.4 L768.6 241.7 L769.3 241.9 L769.9 242.2 L770.5 242.5 L771.2 242.8 L771.8 243.1 L772.5 243.4 L773.1 243.7 L773.7 244.0 L774.4 244.3 L775.0 244.6 L775.6 244.9 L776.3 245.2 L776.9 245.5 L777.5 245.8 L778.2 246.1 L778.8 246.4 L779.5 246.7 L780.1 247.0 L780.7 247.2 L781.4 247.5 L782.0 247.8 L782.6 248.1 L783.3 248.4 L783.9 248.7 L784.6 249.0 L785.2 249.3 L785.8 249.6 L786.5 249.8 L787.1 250.1 L787.7 250.4 L788.4 250.7 L789.0 251.0 L789.6 251.3 L790.3 251.6 L790.9 251.9 L791.6 252.1 L792.2 252.4 L792.8 252.7 L793.5 253.0 L794.1 253.3 L794.7 253.6 L795.4 253.9 L796.0 254.1 L796.7 254.4 L797.3 254.7 L797.9 255.0 L798.6 255.3 L799.2 255.6 L799.8 255.8 L800.5 256.1 L801.1 256.4 L801.7 256.7 L802.4 257.0 L803.0 257.2 L803.7 257.5 L804.3 257.8 L804.9 258.1 L805.6 258.4 L806.2 258.6 L806.8 258.9 L807.5 259.2 L808.1 259.5 L808.7 259.8 L809.4 260.0 L810.0 260.3 L810.7 260.6 L811.3 260.9 L811.9 261.2 L812.6 261.4 L813.2 261.7 L813.8 262.0 L814.5 262.3 L815.1 262.6 L815.8 262.8 L816.4 263.1 L817.0 263.4 L817.7 263.7 L818.3 263.9 L818.9 264.2 L819.6 264.5 L820.2 264.8 L820.8 265.1 L821.5 265.3 L822.1 265.6 L822.8 265.9 L823.4 266.2 L824.0 266.4 L824.7 266.7 L825.3 267.0 L825.9 267.3 L826.6 267.5 L827.2 267.8 L827.8 268.1 L828.5 268.4 L829.1 268.6 L829.8 268.9 L830.4 269.2 L831.0 269.5 L831.7 269.8 L832.3 270.0 L832.9 270.3 L833.6 270.6 L834.2 270.9 L834.8 271.1 L835.5 271.4 L836.1 271.7 L836.8 272.0 L837.4 272.2 L838.0 272.5 L838.7 272.8 L839.3 273.0 L839.9 273.3 L840.6 273.6 L841.2 273.9 L841.9 274.1 L842.5 274.4 L843.1 274.7 L843.8 275.0 L844.4 275.2 L845.0 275.5 L845.7 275.8 L846.3 276.1 L846.9 276.3 L847.6 276.6 L848.2 276.9 L848.9 277.2 L849.5 277.4 L850.1 277.7 L850.8 278.0 L851.4 278.2 L852.0 278.5 L852.7 278.8 L853.3 279.1 L854.0 279.3 L854.6 279.6 L855.2 279.9 L855.9 280.2 L856.5 280.4 L857.1 280.7 L857.8 281.0 L858.4 281.2 L859.0 281.5 L859.7 281.8 L860.3 282.1 L861.0 282.3 L861.6 282.6 L862.2 282.9 L862.9 283.2 L863.5 283.4 L864.1 283.7 L864.8 284.0 L865.4 284.2 L866.0 284.5 L866.7 284.8 L867.3 285.1 L868.0 285.3 L868.6 285.6 L869.2 285.9 L869.9 286.1 L870.5 286.4 L871.1 286.7 L871.8 287.0 L872.4 287.2 L873.0 287.5 L873.7 287.8 L874.3 288.0 L875.0 288.3 L875.6 288.6 L876.2 288.9 L876.9 289.1 L877.5 289.4 L878.1 289.7 L878.8 289.9 L879.4 290.2 L880.1 290.5 L880.7 290.8 L881.3 291.0 L882.0 291.3 L882.6 291.6 L883.2 291.8 L883.9 292.1 L884.5 292.4 L885.1 292.7 L885.8 292.9 L886.4 293.2 L887.1 293.5 L887.7 293.7 L888.3 294.0 L889.0 294.3 L889.6 294.5 L890.2 294.8 L890.9 295.1 L891.5 295.4 L892.2 295.6 L892.8 295.9 L893.4 296.2 L894.1 296.4 L894.7 296.7 L895.3 297.0 L896.0 297.3 L896.6 297.5 L897.2 297.8 L897.9 298.1 L898.5 298.3 L899.2 298.6 L899.8 298.9 L900.4 299.1 L901.1 299.4 L901.7 299.7 L902.3 300.0 L903.0 300.2 L903.6 300.5 L904.2 300.8 L904.9 301.0 L905.5 301.3 L906.2 301.6 L906.8 301.9 L907.4 302.1 L908.1 302.4 L908.7 302.7 L909.3 302.9 L910.0 303.2 L910.6 303.5 L911.2 303.7 L911.9 304.0 L912.5 304.3 L913.2 304.6 L913.8 304.8 L914.4 305.1 L915.1 305.4 L915.7 305.6 L916.3 305.9 L917.0 306.2 L917.6 306.4 L918.3 306.7 L918.9 307.0 L919.5 307.3 L920.2 307.5 L920.8 307.8 L921.4 308.1 L922.1 308.3 L922.7 308.6 L923.3 308.9 L924.0 309.1 L924.6 309.4 L925.3 309.7 L925.9 310.0 L926.5 310.2 L927.2 310.5 L927.8 310.8 L928.4 311.0 L929.1 311.3 L929.7 311.6 L930.3 311.8 L931.0 312.1 L931.6 312.4 L932.3 312.7 L932.9 312.9 L933.5 313.2 L934.2 313.5 L934.8 313.7 L935.4 314.0 L936.1 314.3 L936.7 314.5 L937.4 314.8 L938.0 315.1 L938.6 315.4 L939.3 315.6 L939.9 315.9 L940.5 316.2 L941.2 316.4 L941.8 316.7 L942.4 317.0 L943.1 317.2 L943.7 317.5 L944.4 317.8 L945.0 318.1 L945.6 318.3 L946.3 318.6 L946.9 318.9 L947.5 319.1 L948.2 319.4 L948.8 319.7 L949.5 319.9 L950.1 320.2 L950.7 320.5 L951.4 320.7 L952.0 321.0 L952.6 321.3 L953.3 321.6 L953.9 321.8 L954.5 322.1 L955.2 322.4 L955.8 322.6 L956.5 322.9 L957.1 323.2 L957.7 323.4 L958.4 323.7 L959.0 324.0" stroke="#12128a" stroke-width="1.15" fill="none" stroke-linejoin="round"/>
<path d="M386.0 337.1 L386.6 337.1 L387.3 337.1 L387.9 337.1 L388.5 337.1 L389.2 337.1 L389.8 337.1 L390.5 337.1 L391.1 337.1 L391.7 337.1 L392.4 337.1 L393.0 337.1 L393.6 337.1 L394.3 337.1 L394.9 337.1 L395.5 337.1 L396.2 337.1 L396.8 337.1 L397.5 337.1 L398.1 337.1 L398.7 337.1 L399.4 337.1 L400.0 337.1 L400.6 337.1 L401.3 337.1 L401.9 337.1 L402.6 337.1 L403.2 337.1 L403.8 337.1 L404.5 337.1 L405.1 337.1 L405.7 337.1 L406.4 337.1 L407.0 337.1 L407.6 337.1 L408.3 337.1 L408.9 337.1 L409.6 337.1 L410.2 337.1 L410.8 337.1 L411.5 337.1 L412.1 337.1 L412.7 337.1 L413.4 337.1 L414.0 337.1 L414.6 337.1 L415.3 337.1 L415.9 337.1 L416.6 337.1 L417.2 337.1 L417.8 337.1 L418.5 337.1 L419.1 337.1 L419.7 337.1 L420.4 337.1 L421.0 337.1 L421.7 337.1 L422.3 337.1 L422.9 337.1 L423.6 337.1 L424.2 337.1 L424.8 337.1 L425.5 337.1 L426.1 337.1 L426.7 337.1 L427.4 337.1 L428.0 337.1 L428.7 337.1 L429.3 337.1 L429.9 337.1 L430.6 337.1 L431.2 337.1 L431.8 337.1 L432.5 337.1 L433.1 337.1 L433.8 337.1 L434.4 337.1 L435.0 337.1 L435.7 337.1 L436.3 337.1 L436.9 337.1 L437.6 337.1 L438.2 337.1 L438.8 337.1 L439.5 337.1 L440.1 337.1 L440.8 337.1 L441.4 337.1 L442.0 337.1 L442.7 337.1 L443.3 337.1 L443.9 337.1 L444.6 337.1 L445.2 337.1 L445.8 337.1 L446.5 337.1 L447.1 337.1 L447.8 337.1 L448.4 337.1 L449.0 337.1 L449.7 337.1 L450.3 337.1 L450.9 337.1 L451.6 337.1 L452.2 337.1 L452.9 337.1 L453.5 337.1 L454.1 337.1 L454.8 337.1 L455.4 337.1 L456.0 337.1 L456.7 337.1 L457.3 337.1 L457.9 337.1 L458.6 337.1 L459.2 337.1 L459.9 337.1 L460.5 337.1 L461.1 337.1 L461.8 337.1 L462.4 337.1 L463.0 337.1 L463.7 337.1 L464.3 337.1 L464.9 337.1 L465.6 337.1 L466.2 337.1 L466.9 337.1 L467.5 337.2 L468.1 337.2 L468.8 337.2 L469.4 337.2 L470.0 337.2 L470.7 337.2 L471.3 337.2 L472.0 337.2 L472.6 337.2 L473.2 337.2 L473.9 337.2 L474.5 337.2 L475.1 337.2 L475.8 337.2 L476.4 337.2 L477.0 337.2 L477.7 337.2 L478.3 337.2 L479.0 337.2 L479.6 337.2 L480.2 337.2 L480.9 337.2 L481.5 337.2 L482.1 337.2 L482.8 337.2 L483.4 337.2 L484.0 337.2 L484.7 337.2 L485.3 337.2 L486.0 337.2 L486.6 337.2 L487.2 337.2 L487.9 337.2 L488.5 337.2 L489.1 337.2 L489.8 337.2 L490.4 337.2 L491.0 337.2 L491.7 337.2 L492.3 337.2 L493.0 337.2 L493.6 337.2 L494.2 337.2 L494.9 337.2 L495.5 337.2 L496.1 337.2 L496.8 337.2 L497.4 337.2 L498.1 337.2 L498.7 337.2 L499.3 337.2 L500.0 337.2 L500.6 337.2 L501.2 337.2 L501.9 337.2 L502.5 337.2 L503.1 337.2 L503.8 337.2 L504.4 337.2 L505.1 337.2 L505.7 337.2 L506.3 337.2 L507.0 337.2 L507.6 337.2 L508.2 337.2 L508.9 337.3 L509.5 337.3 L510.1 337.3 L510.8 337.3 L511.4 337.3 L512.1 337.3 L512.7 337.3 L513.3 337.3 L514.0 337.3 L514.6 337.3 L515.2 337.3 L515.9 337.3 L516.5 337.3 L517.2 337.3 L517.8 337.3 L518.4 337.3 L519.1 337.3 L519.7 337.3 L520.3 337.3 L521.0 337.3 L521.6 337.3 L522.2 337.3 L522.9 337.3 L523.5 337.3 L524.2 337.3 L524.8 337.3 L525.4 337.3 L526.1 337.3 L526.7 337.3 L527.3 337.3 L528.0 337.3 L528.6 337.3 L529.2 337.3 L529.9 337.3 L530.5 337.3 L531.2 337.3 L531.8 337.3 L532.4 337.3 L533.1 337.3 L533.7 337.3 L534.3 337.3 L535.0 337.4 L535.6 337.4 L536.3 337.4 L536.9 337.4 L537.5 337.4 L538.2 337.4 L538.8 337.4 L539.4 337.4 L540.1 337.4 L540.7 337.4 L541.3 337.4 L542.0 337.4 L542.6 337.4 L543.3 337.4 L543.9 337.4 L544.5 337.4 L545.2 337.4 L545.8 337.4 L546.4 337.4 L547.1 337.4 L547.7 337.4 L548.4 337.4 L549.0 337.4 L549.6 337.4 L550.3 337.4 L550.9 337.4 L551.5 337.4 L552.2 337.4 L552.8 337.4 L553.4 337.4 L554.1 337.5 L554.7 337.5 L555.4 337.5 L556.0 337.5 L556.6 337.5 L557.3 337.5 L557.9 337.5 L558.5 337.5 L559.2 337.5 L559.8 337.5 L560.4 337.5 L561.1 337.5 L561.7 337.5 L562.4 337.5 L563.0 337.5 L563.6 337.5 L564.3 337.5 L564.9 337.5 L565.5 337.5 L566.2 337.5 L566.8 337.5 L567.5 337.5 L568.1 337.5 L568.7 337.6 L569.4 337.6 L570.0 337.6 L570.6 337.6 L571.3 337.6 L571.9 337.6 L572.5 337.6 L573.2 337.6 L573.8 337.6 L574.5 337.6 L575.1 337.6 L575.7 337.6 L576.4 337.6 L577.0 337.6 L577.6 337.6 L578.3 337.6 L578.9 337.6 L579.5 337.6 L580.2 337.7 L580.8 337.7 L581.5 337.7 L582.1 337.7 L582.7 337.7 L583.4 337.7 L584.0 337.7 L584.6 337.7 L585.3 337.7 L585.9 337.7 L586.5 337.7 L587.2 337.7 L587.8 337.7 L588.5 337.7 L589.1 337.7 L589.7 337.8 L590.4 337.8 L591.0 337.8 L591.6 337.8 L592.3 337.8 L592.9 337.8 L593.6 337.8 L594.2 337.8 L594.8 337.8 L595.5 337.8 L596.1 337.8 L596.7 337.8 L597.4 337.9 L598.0 337.9 L598.6 337.9 L599.3 337.9 L599.9 337.9 L600.6 337.9 L601.2 337.9 L601.8 337.9 L602.5 337.9 L603.1 337.9 L603.7 338.0 L604.4 338.0 L605.0 338.0 L605.7 338.0 L606.3 338.0 L606.9 338.0 L607.6 338.0 L608.2 338.0 L608.8 338.0 L609.5 338.1 L610.1 338.1 L610.7 338.1 L611.4 338.1 L612.0 338.1 L612.7 338.1 L613.3 338.1 L613.9 338.2 L614.6 338.2 L615.2 338.2 L615.8 338.2 L616.5 338.2 L617.1 338.2 L617.7 338.2 L618.4 338.3 L619.0 338.3 L619.7 338.3 L620.3 338.3 L620.9 338.3 L621.6 338.4 L622.2 338.4 L622.8 338.4 L623.5 338.4 L624.1 338.4 L624.8 338.5 L625.4 338.5 L626.0 338.5 L626.7 338.5 L627.3 338.5 L627.9 338.6 L628.6 338.6 L629.2 338.6 L629.8 338.6 L630.5 338.7 L631.1 338.7 L631.8 338.7 L632.4 338.8 L633.0 338.8 L633.7 338.8 L634.3 338.9 L634.9 338.9 L635.6 338.9 L636.2 339.0 L636.8 339.0 L637.5 339.0 L638.1 339.1 L638.8 339.1 L639.4 339.2 L640.0 339.2 L640.7 339.3 L641.3 339.3 L641.9 339.3 L642.6 339.4 L643.2 339.5 L643.8 339.5 L644.5 339.6 L645.1 339.6 L645.8 339.7 L646.4 339.8 L647.0 339.8 L647.7 339.9 L648.3 340.0 L648.9 340.1 L649.6 340.2 L650.2 340.3 L650.9 340.4 L651.5 340.5 L652.1 340.6 L652.8 340.7 L653.4 340.8 L654.0 340.9 L654.7 341.1 L655.3 341.2 L655.9 341.4 L656.6 341.6 L657.2 341.8 L657.9 342.0 L658.5 342.2 L659.1 342.5 L659.8 342.7 L660.4 343.0 L661.0 343.4 L661.7 343.7 L662.3 344.2 L663.0 344.6 L663.6 345.2 L664.2 345.8 L664.9 346.5 L665.5 347.4 L666.1 348.4 L666.8 349.6 L667.4 351.1 L668.0 353.0 L668.7 355.5 L669.3 358.9 L670.0 363.6 L670.6 370.7 L671.2 381.8 L671.9 399.7 L672.5 425.0 L673.1 450.3 L673.8 468.2 L674.4 479.3 L675.0 486.4 L675.7 491.1 L676.3 494.5 L677.0 497.0 L677.6 498.9 L678.2 500.4 L678.9 501.6 L679.5 502.6 L680.1 503.5 L680.8 504.2 L681.4 504.8 L682.0 505.4 L682.7 505.8 L683.3 506.3 L684.0 506.6 L684.6 507.0 L685.2 507.3 L685.9 507.5 L686.5 507.8 L687.1 508.0 L687.8 508.2 L688.4 508.4 L689.1 508.6 L689.7 508.8 L690.3 508.9 L691.0 509.1 L691.6 509.2 L692.2 509.3 L692.9 509.4 L693.5 509.5 L694.1 509.6 L694.8 509.7 L695.4 509.8 L696.1 509.9 L696.7 510.0 L697.3 510.1 L698.0 510.2 L698.6 510.2 L699.2 510.3 L699.9 510.4 L700.5 510.4 L701.2 510.5 L701.8 510.5 L702.4 510.6 L703.1 510.7 L703.7 510.7 L704.3 510.7 L705.0 510.8 L705.6 510.8 L706.2 510.9 L706.9 510.9 L707.5 511.0 L708.2 511.0 L708.8 511.0 L709.4 511.1 L710.1 511.1 L710.7 511.1 L711.3 511.2 L712.0 511.2 L712.6 511.2 L713.2 511.3 L713.9 511.3 L714.5 511.3 L715.2 511.4 L715.8 511.4 L716.4 511.4 L717.1 511.4 L717.7 511.5 L718.3 511.5 L719.0 511.5 L719.6 511.5 L720.2 511.5 L720.9 511.6 L721.5 511.6 L722.2 511.6 L722.8 511.6 L723.4 511.6 L724.1 511.7 L724.7 511.7 L725.3 511.7 L726.0 511.7 L726.6 511.7 L727.3 511.8 L727.9 511.8 L728.5 511.8 L729.2 511.8 L729.8 511.8 L730.4 511.8 L731.1 511.8 L731.7 511.9 L732.3 511.9 L733.0 511.9 L733.6 511.9 L734.3 511.9 L734.9 511.9 L735.5 511.9 L736.2 512.0 L736.8 512.0 L737.4 512.0 L738.1 512.0 L738.7 512.0 L739.3 512.0 L740.0 512.0 L740.6 512.0 L741.3 512.0 L741.9 512.1 L742.5 512.1 L743.2 512.1 L743.8 512.1 L744.4 512.1 L745.1 512.1 L745.7 512.1 L746.4 512.1 L747.0 512.1 L747.6 512.1 L748.3 512.2 L748.9 512.2 L749.5 512.2 L750.2 512.2 L750.8 512.2 L751.4 512.2 L752.1 512.2 L752.7 512.2 L753.4 512.2 L754.0 512.2 L754.6 512.2 L755.3 512.2 L755.9 512.3 L756.5 512.3 L757.2 512.3 L757.8 512.3 L758.5 512.3 L759.1 512.3 L759.7 512.3 L760.4 512.3 L761.0 512.3 L761.6 512.3 L762.3 512.3 L762.9 512.3 L763.5 512.3 L764.2 512.3 L764.8 512.3 L765.5 512.4 L766.1 512.4 L766.7 512.4 L767.4 512.4 L768.0 512.4 L768.6 512.4 L769.3 512.4 L769.9 512.4 L770.5 512.4 L771.2 512.4 L771.8 512.4 L772.5 512.4 L773.1 512.4 L773.7 512.4 L774.4 512.4 L775.0 512.4 L775.6 512.4 L776.3 512.4 L776.9 512.5 L777.5 512.5 L778.2 512.5 L778.8 512.5 L779.5 512.5 L780.1 512.5 L780.7 512.5 L781.4 512.5 L782.0 512.5 L782.6 512.5 L783.3 512.5 L783.9 512.5 L784.6 512.5 L785.2 512.5 L785.8 512.5 L786.5 512.5 L787.1 512.5 L787.7 512.5 L788.4 512.5 L789.0 512.5 L789.6 512.5 L790.3 512.5 L790.9 512.5 L791.6 512.6 L792.2 512.6 L792.8 512.6 L793.5 512.6 L794.1 512.6 L794.7 512.6 L795.4 512.6 L796.0 512.6 L796.7 512.6 L797.3 512.6 L797.9 512.6 L798.6 512.6 L799.2 512.6 L799.8 512.6 L800.5 512.6 L801.1 512.6 L801.7 512.6 L802.4 512.6 L803.0 512.6 L803.7 512.6 L804.3 512.6 L804.9 512.6 L805.6 512.6 L806.2 512.6 L806.8 512.6 L807.5 512.6 L808.1 512.6 L808.7 512.6 L809.4 512.6 L810.0 512.6 L810.7 512.7 L811.3 512.7 L811.9 512.7 L812.6 512.7 L813.2 512.7 L813.8 512.7 L814.5 512.7 L815.1 512.7 L815.8 512.7 L816.4 512.7 L817.0 512.7 L817.7 512.7 L818.3 512.7 L818.9 512.7 L819.6 512.7 L820.2 512.7 L820.8 512.7 L821.5 512.7 L822.1 512.7 L822.8 512.7 L823.4 512.7 L824.0 512.7 L824.7 512.7 L825.3 512.7 L825.9 512.7 L826.6 512.7 L827.2 512.7 L827.8 512.7 L828.5 512.7 L829.1 512.7 L829.8 512.7 L830.4 512.7 L831.0 512.7 L831.7 512.7 L832.3 512.7 L832.9 512.7 L833.6 512.7 L834.2 512.7 L834.8 512.7 L835.5 512.7 L836.1 512.7 L836.8 512.8 L837.4 512.8 L838.0 512.8 L838.7 512.8 L839.3 512.8 L839.9 512.8 L840.6 512.8 L841.2 512.8 L841.9 512.8 L842.5 512.8 L843.1 512.8 L843.8 512.8 L844.4 512.8 L845.0 512.8 L845.7 512.8 L846.3 512.8 L846.9 512.8 L847.6 512.8 L848.2 512.8 L848.9 512.8 L849.5 512.8 L850.1 512.8 L850.8 512.8 L851.4 512.8 L852.0 512.8 L852.7 512.8 L853.3 512.8 L854.0 512.8 L854.6 512.8 L855.2 512.8 L855.9 512.8 L856.5 512.8 L857.1 512.8 L857.8 512.8 L858.4 512.8 L859.0 512.8 L859.7 512.8 L860.3 512.8 L861.0 512.8 L861.6 512.8 L862.2 512.8 L862.9 512.8 L863.5 512.8 L864.1 512.8 L864.8 512.8 L865.4 512.8 L866.0 512.8 L866.7 512.8 L867.3 512.8 L868.0 512.8 L868.6 512.8 L869.2 512.8 L869.9 512.8 L870.5 512.8 L871.1 512.8 L871.8 512.8 L872.4 512.8 L873.0 512.8 L873.7 512.8 L874.3 512.8 L875.0 512.8 L875.6 512.8 L876.2 512.8 L876.9 512.8 L877.5 512.8 L878.1 512.9 L878.8 512.9 L879.4 512.9 L880.1 512.9 L880.7 512.9 L881.3 512.9 L882.0 512.9 L882.6 512.9 L883.2 512.9 L883.9 512.9 L884.5 512.9 L885.1 512.9 L885.8 512.9 L886.4 512.9 L887.1 512.9 L887.7 512.9 L888.3 512.9 L889.0 512.9 L889.6 512.9 L890.2 512.9 L890.9 512.9 L891.5 512.9 L892.2 512.9 L892.8 512.9 L893.4 512.9 L894.1 512.9 L894.7 512.9 L895.3 512.9 L896.0 512.9 L896.6 512.9 L897.2 512.9 L897.9 512.9 L898.5 512.9 L899.2 512.9 L899.8 512.9 L900.4 512.9 L901.1 512.9 L901.7 512.9 L902.3 512.9 L903.0 512.9 L903.6 512.9 L904.2 512.9 L904.9 512.9 L905.5 512.9 L906.2 512.9 L906.8 512.9 L907.4 512.9 L908.1 512.9 L908.7 512.9 L909.3 512.9 L910.0 512.9 L910.6 512.9 L911.2 512.9 L911.9 512.9 L912.5 512.9 L913.2 512.9 L913.8 512.9 L914.4 512.9 L915.1 512.9 L915.7 512.9 L916.3 512.9 L917.0 512.9 L917.6 512.9 L918.3 512.9 L918.9 512.9 L919.5 512.9 L920.2 512.9 L920.8 512.9 L921.4 512.9 L922.1 512.9 L922.7 512.9 L923.3 512.9 L924.0 512.9 L924.6 512.9 L925.3 512.9 L925.9 512.9 L926.5 512.9 L927.2 512.9 L927.8 512.9 L928.4 512.9 L929.1 512.9 L929.7 512.9 L930.3 512.9 L931.0 512.9 L931.6 512.9 L932.3 512.9 L932.9 512.9 L933.5 512.9 L934.2 512.9 L934.8 512.9 L935.4 512.9 L936.1 512.9 L936.7 512.9 L937.4 512.9 L938.0 512.9 L938.6 512.9 L939.3 512.9 L939.9 512.9 L940.5 512.9 L941.2 512.9 L941.8 512.9 L942.4 512.9 L943.1 512.9 L943.7 512.9 L944.4 512.9 L945.0 512.9 L945.6 512.9 L946.3 512.9 L946.9 512.9 L947.5 512.9 L948.2 512.9 L948.8 512.9 L949.5 512.9 L950.1 512.9 L950.7 512.9 L951.4 512.9 L952.0 512.9 L952.6 512.9 L953.3 512.9 L953.9 512.9 L954.5 512.9 L955.2 512.9 L955.8 512.9 L956.5 512.9 L957.1 512.9 L957.7 512.9 L958.4 512.9 L959.0 512.9" stroke="#12128a" stroke-width="1.15" fill="none" stroke-linejoin="round"/>
<path d="M386 337.5 H640" stroke="#12128a" stroke-width="1.6"/>
<text x="381.5" y="125.7" text-anchor="end" class="tl">-80</text>
<text x="381.5" y="166.1" text-anchor="end" class="tl">-100</text>
<text x="381.5" y="206.5" text-anchor="end" class="tl">-120</text>
<text x="381.5" y="246.9" text-anchor="end" class="tl">-140</text>
<text x="381.5" y="287.3" text-anchor="end" class="tl">-160</text>
<text x="381.5" y="327.7" text-anchor="end" class="tl">-180</text>
<text x="381.5" y="340.7" text-anchor="end" class="tl">0</text>
<text x="381.5" y="384.7" text-anchor="end" class="tl">-45</text>
<text x="381.5" y="428.7" text-anchor="end" class="tl">-90</text>
<text x="381.5" y="472.7" text-anchor="end" class="tl">-135</text>
<text x="381.5" y="516.7" text-anchor="end" class="tl">-180</text>
<text x="389.5" y="533.5" text-anchor="end" class="tl">10</text>
<text x="390.2" y="525.6" class="ts">3</text>
<text x="580.5" y="533.5" text-anchor="end" class="tl">10</text>
<text x="581.2" y="525.6" class="ts">4</text>
<text x="771.5" y="533.5" text-anchor="end" class="tl">10</text>
<text x="772.2" y="525.6" class="ts">5</text>
<text x="962.5" y="533.5" text-anchor="end" class="tl">10</text>
<text x="963.2" y="525.6" class="ts">6</text>
<text x="671" y="113" text-anchor="middle" class="t2">Bode Diagram</text>
<text x="671" y="552" text-anchor="middle" class="tt" xml:space="preserve" textLength="92">Frequency  (rad/s)</text>
<text transform="translate(349.7 224.5) rotate(-90)" text-anchor="middle" class="tt">Magnitude (dB)</text>
<text transform="translate(349.7 426.5) rotate(-90)" text-anchor="middle" class="tt">Phase (deg)</text>
</svg>

</div>
</body>
</html>
